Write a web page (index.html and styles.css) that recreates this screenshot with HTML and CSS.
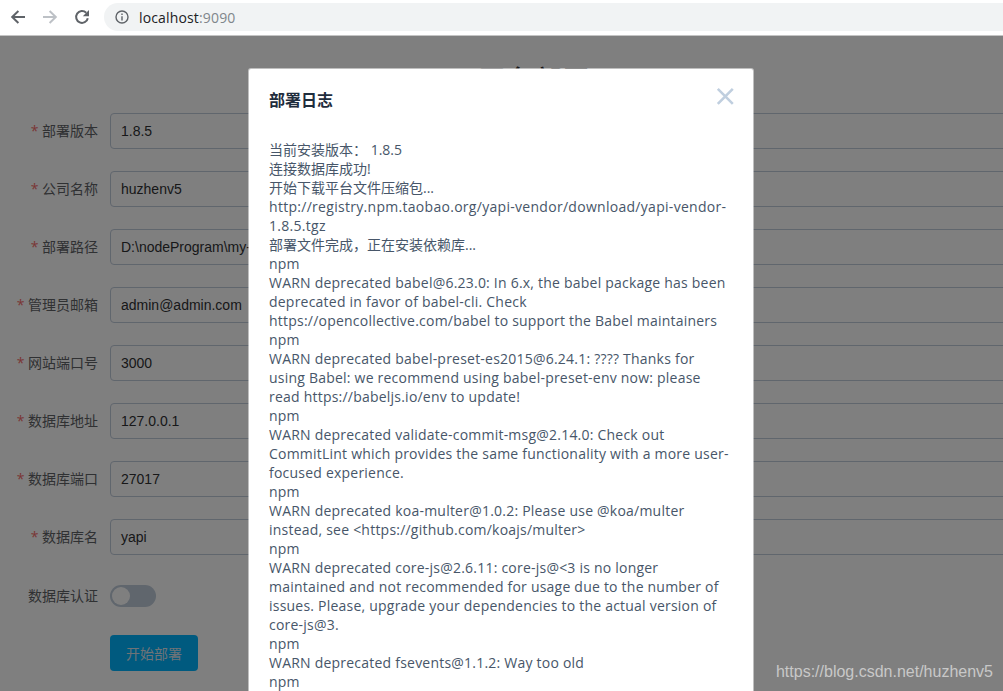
FILE: index.html
```html
<!DOCTYPE html>
<html lang="zh">
<head>
<meta charset="utf-8">
<title>localhost:9090</title>
<link rel="stylesheet" href="styles.css">
</head>
<body>
<header class="toolbar">
  <svg class="nav-icon" viewBox="0 0 16 16"><path d="M15 8H2.6M8.4 2L2.2 8l6.2 6" fill="none" stroke="#5f6368" stroke-width="2"/></svg>
  <svg class="nav-icon" viewBox="0 0 16 16"><path d="M1 8h12.4M7.6 2l6.2 6-6.2 6" fill="none" stroke="#bdc1c6" stroke-width="2"/></svg>
  <svg class="nav-icon" viewBox="0 0 16 16"><path d="M13.8 9.2A5.9 5.9 0 1 1 12.2 3.8" fill="none" stroke="#5f6368" stroke-width="2"/><path d="M15 1v6.2H8.8z" fill="#5f6368"/></svg>
  <div class="address">
    <svg class="info" viewBox="0 0 14 14"><circle cx="7" cy="7" r="6" fill="none" stroke="#5f6368" stroke-width="1.4"/><path d="M7 6.2v4.2M7 3.4v1.6" stroke="#5f6368" stroke-width="1.4"/></svg>
    <span class="host">localhost</span><span class="port">:9090</span>
  </div>
</header>
<main class="page">
  <h1 class="page-title">YApi 平台部署</h1>
  <form class="form">
    <div class="row"><label class="label req">部署版本</label><div class="input">1.8.5</div></div>
    <div class="row"><label class="label req">公司名称</label><div class="input">huzhenv5</div></div>
    <div class="row"><label class="label req">部署路径</label><div class="input">D:\nodeProgram\my-yapi</div></div>
    <div class="row"><label class="label req">管理员邮箱</label><div class="input">admin@admin.com</div></div>
    <div class="row"><label class="label req">网站端口号</label><div class="input">3000</div></div>
    <div class="row"><label class="label req">数据库地址</label><div class="input">127.0.0.1</div></div>
    <div class="row"><label class="label req">数据库端口</label><div class="input">27017</div></div>
    <div class="row"><label class="label req">数据库名</label><div class="input">yapi</div></div>
    <div class="row switch-row"><label class="label">数据库认证</label><span class="switch"><span class="knob"></span></span></div>
    <div class="row button-row"><button type="button" class="primary">开始部署</button></div>
  </form>
  <div class="overlay">
    <section class="dialog">
      <div class="dialog-head">
        <h2 class="dialog-title">部署日志</h2>
        <svg class="close" viewBox="0 0 18 18"><path d="M1.8 1.8l15 15M16.8 1.8l-15 15" stroke="#c0cfdf" stroke-width="2.6" fill="none"/></svg>
      </div>
      <div class="log">
        <div>当前安装版本： 1.8.5</div>
        <div>连接数据库成功!</div>
        <div>开始下载平台文件压缩包...</div>
        <div class="url">http://registry.npm.taobao.org/yapi-vendor/download/yapi-vendor-1.8.5.tgz</div>
        <div>部署文件完成，正在安装依赖库...</div>
        <div class="en">npm</div>
        <div class="en">WARN deprecated babel@6.23.0: In 6.x, the babel package has been deprecated in favor of babel-cli. Check https://opencollective.com/babel to support the Babel maintainers</div>
        <div class="en">npm</div>
        <div class="en">WARN deprecated babel-preset-es2015@6.24.1: ???? Thanks for using Babel: we recommend using babel-preset-env now: please read https://babeljs.io/env to update!</div>
        <div class="en">npm</div>
        <div class="en">WARN deprecated validate-commit-msg@2.14.0: Check out CommitLint which provides the same functionality with a more user-focused experience.</div>
        <div class="en">npm</div>
        <div class="en">WARN deprecated koa-multer@1.0.2: Please use @koa/multer instead, see &lt;https://github.com/koajs/multer&gt;</div>
        <div class="en">npm</div>
        <div class="en">WARN deprecated core-js@2.6.11: core-js@&lt;3 is no longer maintained and not recommended for usage due to the number of issues. Please, upgrade your dependencies to the actual version of core-js@3.</div>
        <div class="en">npm</div>
        <div class="en">WARN deprecated fsevents@1.1.2: Way too old</div>
        <div class="en">npm</div>
      </div>
    </section>
    <div class="watermark">https://blog.csdn.net/huzhenv5</div>
  </div>
</main>
</body>
</html>
```
FILE: styles.css
```css
* { box-sizing: border-box; }
html, body { margin: 0; height: 100%; overflow: hidden; }
body {
  display: flex;
  flex-direction: column;
  font-family: "Open Sans", "Noto Sans CJK SC", sans-serif;
  background: #fff;
  color: #606266;
}
.toolbar {
  flex: none;
  height: 36px;
  display: flex;
  align-items: center;
  padding: 0 0 1px 10px;
  gap: 16px;
  background: #fff;
  border-bottom: 1px solid #c4c4c4;
}
.nav-icon { width: 16px; height: 16px; flex: none; }
.address {
  flex: 1;
  height: 28px;
  margin-left: -2px;
  border-radius: 14px 0 0 14px;
  background: #f1f3f4;
  display: flex;
  align-items: center;
  padding-left: 11px;
  font-size: 14px;
  letter-spacing: 0.15px;
}
.info { width: 14px; height: 14px; margin-right: 10px; }
.host { color: #202124; }
.port { color: #80868b; }
.page { flex: 1; position: relative; min-height: 0; overflow: hidden; }
.page-title {
  margin: 0;
  padding-top: 24px;
  height: 77px;
  text-align: center;
  font-size: 28px;
  font-weight: 500;
  line-height: 40px;
  color: #303133;
}
.form { display: flex; flex-direction: column; gap: 22px; }
.row { display: flex; align-items: center; height: 36px; }
.label {
  flex: none;
  width: 110px;
  padding: 0 12px 2px 0;
  text-align: right;
  font-size: 14px;
  color: #606266;
}
.req::before { content: "* "; color: #f56c6c; }
.input {
  flex: none;
  width: 1000px;
  height: 36px;
  padding: 0 10px;
  line-height: 34px;
  border: 1px solid #c0ccda;
  border-radius: 4px;
  font-size: 14px;
  font-family: "Liberation Sans", "Noto Sans CJK SC", sans-serif;
  color: #303133;
  background: #fff;
}
.switch-row { margin-top: 1px; }
.switch {
  width: 46px;
  height: 22px;
  border-radius: 11px;
  background: #c0ccda;
  padding: 2px;
  display: flex;
}
.knob { width: 18px; height: 18px; border-radius: 50%; background: #fff; }
.button-row { margin-top: -1px; padding-left: 110px; }
.primary {
  width: 88px;
  height: 36px;
  border: 0;
  border-radius: 4px;
  background: #00b4ff;
  color: #dfe6ee;
  font: 14px "Noto Sans CJK SC", sans-serif;
  padding: 0;
}
.overlay { position: absolute; inset: 0; background: rgba(0, 0, 0, 0.5); }
.dialog {
  position: absolute;
  left: 249px;
  top: 33px;
  width: 504px;
  min-height: 700px;
  padding: 20px;
  background: #fff;
  border-radius: 2px;
  box-shadow: 0 0 0 1px rgba(255, 255, 255, .5);
}
.dialog-head { display: flex; justify-content: space-between; align-items: flex-start; height: 50px; }
.dialog-title { margin: 0; font-size: 16px; line-height: 22px; font-weight: 700; color: #1f2d3d; }
.close { width: 18px; height: 18px; margin: -2px -1px 0 0; }
.log { font-size: 14px; line-height: 19px; color: #475669; padding-top: 1px; }
.en { letter-spacing: 0.22px; }
.url { letter-spacing: 0.29px; }
.watermark {
  position: absolute;
  right: 10px;
  bottom: 10px;
  font: 16px "Liberation Sans", sans-serif;
  color: #c8c8c8;
}
```
